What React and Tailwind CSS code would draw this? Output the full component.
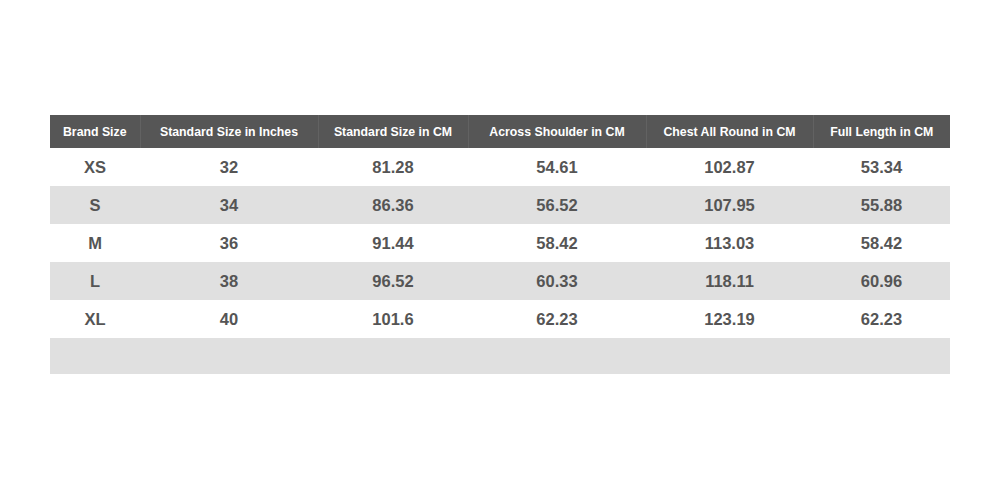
import React from "react";

const columns = [
  { label: "Brand Size", width: "w-[90px]" },
  { label: "Standard Size in Inches", width: "w-[178px]" },
  { label: "Standard Size in CM", width: "w-[150px]" },
  { label: "Across Shoulder in CM", width: "w-[178px]" },
  { label: "Chest All Round in CM", width: "w-[167px]" },
  { label: "Full Length in CM", width: "w-[137px]" },
];

const rows = [
  ["XS", "32", "81.28", "54.61", "102.87", "53.34"],
  ["S", "34", "86.36", "56.52", "107.95", "55.88"],
  ["M", "36", "91.44", "58.42", "113.03", "58.42"],
  ["L", "38", "96.52", "60.33", "118.11", "60.96"],
  ["XL", "40", "101.6", "62.23", "123.19", "62.23"],
];

const App = () => {
  return (
    <div className="w-[1000px] h-[490px] bg-white pt-[115px] pl-[50px] font-['Liberation_Sans',Arial,sans-serif]">
      <table className="w-[900px] table-fixed border-collapse">
        <thead>
          <tr className="bg-[#565656] h-[33px]">
            {columns.map((c, i) => (
              <th
                key={c.label}
                className={`${c.width} p-0 pt-[2px] text-[12.3px] font-bold text-white text-center ${
                  i > 0 ? "border-l border-[#626262]" : ""
                }`}
              >
                {c.label}
              </th>
            ))}
          </tr>
        </thead>
        <tbody>
          {rows.map((r, idx) => (
            <tr key={idx} className={`h-[38px] ${idx % 2 === 1 ? "bg-[#e0e0e0]" : "bg-white"}`}>
              {r.map((v, j) => (
                <td key={j} className="p-0 pt-[1px] text-center text-[16.5px] font-bold text-[#555555]">
                  {v}
                </td>
              ))}
            </tr>
          ))}
          <tr className="h-[36px] bg-[#e0e0e0]">
            <td colSpan={6}></td>
          </tr>
        </tbody>
      </table>
    </div>
  );
};

export default App;
